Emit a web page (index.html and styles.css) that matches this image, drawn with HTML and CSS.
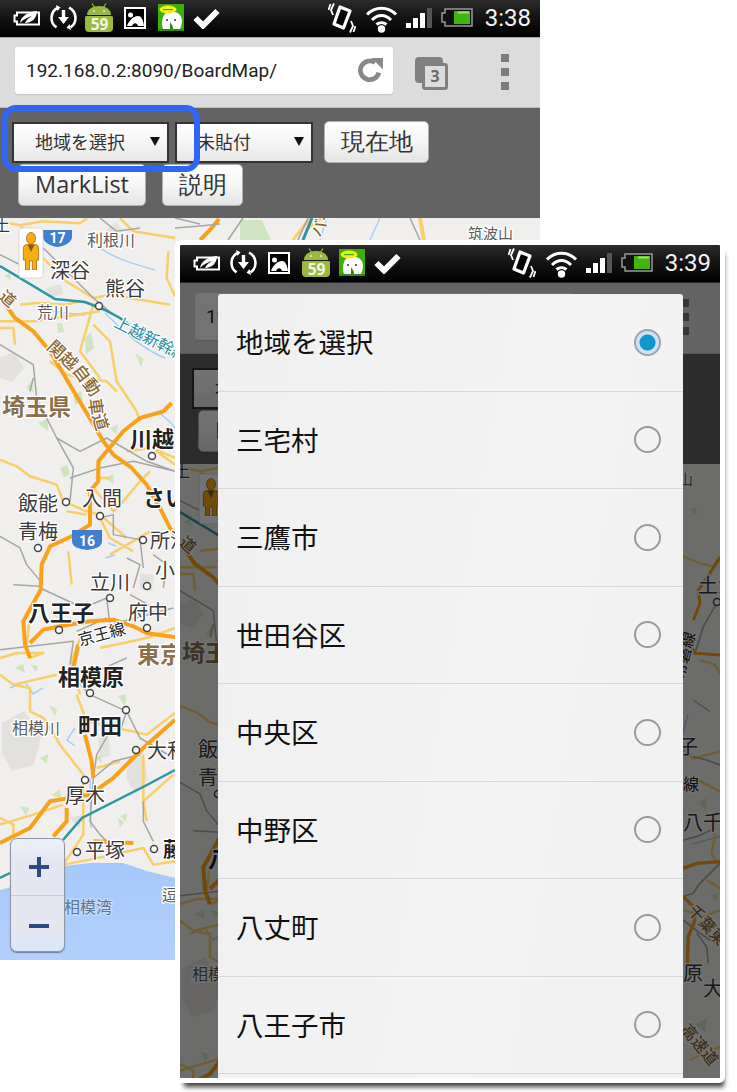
FILE: index.html
```html
<!DOCTYPE html>
<html lang="ja">
<head>
<meta charset="utf-8">
<title>BoardMap</title>
<link rel="stylesheet" href="styles.css">
</head>
<body>
<svg class="defs" width="0" height="0" aria-hidden="true">
  <defs>
    <linearGradient id="ic-sea" x1="0" y1="0" x2="0" y2="1"><stop offset="0" stop-color="#a5c8fb"/><stop offset="1" stop-color="#b3d0fc"/></linearGradient>
    <symbol id="i-leaf" viewBox="0 0 28 18">
      <path d="M4 3.5H26V15.5H4V12.5H1.5V6.5H4Z" fill="none" stroke="#fff" stroke-width="2"/>
      <path d="M7 14C8 7 15 3 24 2C24 9 19 14 12 14C14 10 16 9 19 7C15 8 11 10 7 14Z" fill="#fff"/>
    </symbol>
    <symbol id="i-sync" viewBox="0 0 27 27">
      <path d="M8 3.6A11.5 11.5 0 0 0 6.5 23.4M19 3.6A11.5 11.5 0 0 1 20.5 23.4" fill="none" stroke="#fff" stroke-width="2.600"/>
      <path d="M6 1L10.500 3.200L7.500 7ZM21 26L16.500 23.800L19.500 20Z" fill="#fff"/>
      <path d="M11.800 6H15.200V13H19L13.500 20L8 13H11.800Z" fill="#fff"/>
    </symbol>
    <symbol id="i-droid" viewBox="0 0 28 29">
      <path d="M7 0.500L10 5M21 0.500L18 5" stroke="#9ab93f" stroke-width="1.200" fill="none"/>
      <path d="M2 12C2 6 8 3 14 3C20 3 26 6 26 12Z" fill="#9ab93f"/>
      <circle cx="9" cy="8" r="1.100" fill="#dfe8c0"/>
      <circle cx="19" cy="8" r="1.100" fill="#dfe8c0"/>
      <path d="M0 15C0 13 1 13 2 13H26C27 13 28 13 28 15V25C28 28 26 29 24 29H4C2 29 0 28 0 25Z" fill="#9ab93f"/>
      <text class="droid-num" x="14.500" y="27">59</text>
    </symbol>
    <symbol id="i-image" viewBox="0 0 22 22">
      <rect x="1" y="1" width="20" height="20" fill="#000" stroke="#fff" stroke-width="2"/>
      <circle cx="6.500" cy="8" r="2.500" fill="#fff"/>
      <path d="M3 19C5 13 10 9 14 9C17 9 19 12 20 19H14C13 16 10 15 8 19Z" fill="#fff"/>
    </symbol>
    <symbol id="i-check" viewBox="0 0 27 22">
      <path d="M2.500 11L10 18.500L24.500 4" fill="none" stroke="#fff" stroke-width="6"/>
    </symbol>
    <symbol id="i-vibrate" viewBox="0 0 28 30">
      <path d="M12 4L22 8L15.500 25L6 21Z" fill="#000" stroke="#fff" stroke-width="3.200" stroke-linejoin="round"/>
      <path d="M6 0.500L3 7L5 12M2.500 1L0.500 7M22 29.500L25 23L23 18M25.500 29L27.500 23" fill="none" stroke="#fff" stroke-width="1.800"/>
    </symbol>
    <symbol id="i-wifi" viewBox="0 0 33 30">
      <path d="M2 11.500C10 3 23 3 31 11.500M7 17C13 11 20 11 26 17M11.500 21.500C14.500 19 18.500 19 21.500 21.500" fill="none" stroke="#fff" stroke-width="3"/>
      <circle cx="16.500" cy="26" r="3.700" fill="#fff"/>
    </symbol>
    <symbol id="i-signal" viewBox="0 0 26 20">
      <rect x="0" y="15" width="5" height="5" fill="#fff"/>
      <rect x="7" y="10" width="5" height="10" fill="#fff"/>
      <rect x="14" y="5" width="5" height="15" fill="#fff"/>
      <rect x="21" y="0" width="5" height="20" fill="#555"/>
    </symbol>
    <symbol id="i-battery" viewBox="0 0 32 19">
      <path d="M4 1H31V18H4V14H1V5H4Z" fill="#111" stroke="#999" stroke-width="1.500"/>
      <rect x="13" y="3" width="16" height="13" fill="#3fb60f"/>
      <rect x="17" y="3.500" width="11" height="2" fill="#9fe06a"/>
    </symbol>
    <symbol id="i-owl" viewBox="0 0 26 27">
      <rect width="26" height="27" fill="#3caf0c"/>
      <path d="M5 25C3 20 4 12 8 9C12 7 19 7 22 11C25 15 24 21 22 25Z" fill="#fff"/>
      <ellipse cx="10" cy="5.500" rx="8.500" ry="4" fill="#f3ee16"/>
      <rect x="5" y="5" width="10" height="1.200" fill="#3caf0c"/>
      <circle cx="9" cy="16" r="1" fill="#333"/>
      <circle cx="17" cy="16" r="1" fill="#333"/>
      <path d="M12 18C13 20 15 21 15 25H12Z" fill="#2c8a10"/>
      <rect y="25" width="26" height="2" fill="#2c8a10"/>
    </symbol>
    <symbol id="i-peg" viewBox="0 0 26 42" preserveAspectRatio="none">
      <circle cx="13" cy="7" r="6.500" fill="#f7ac0f" stroke="#a86a0c"/>
      <path d="M6 14H20C23 14 24 16 24 19V31H21V42H15V32H11V42H5V31H2V19C2 16 3 14 6 14Z" fill="#f7ac0f" stroke="#a86a0c"/>
      <path d="M8 14L13 22L18 14Z" fill="#8a5a20"/>
    </symbol>
    <g id="map">
      <rect width="540" height="742" fill="#f0efed"/>
      <path d="M0 672L33 663L65 648L90 645L123 645L147 653L175 660L300 670L540 680V742H0Z" fill="url(#ic-sea)"/>
      <g fill="#e3e1de">
        <path d="M0 140l14-6 10 16-12 14-12-4zM2 505l22-12 18 22-8 32-22 6-10-18zM128 540l14-8 6 30-12 14-10-16zM98 520l10-6 2 24-10 2zM70 600l12-3-2 14zM106 12l10-8 6 8-8 8zM45 70l16-4 2 10-12 4zM140 355l14 2-2 16-12-2zM28 640l14-6 6 14-14 4z"/>
      </g>
      <g fill="#cfe4c0">
        <path d="M57 105l5 0 2 9-6 1zM85 120l6-6 3 16-8 6zM26 170l6-8 1 12zM73 178l8-5 2 10-8 4zM110 210l8-3-2 10zM38 205l10-4 0 12zM60 250l7-3 3 10-7 2zM105 260l8-4 1 10zM135 135l9 6-3 8zM4 58l6-3 1 7zM50 395l9-3-1 9zM15 450l8-4 2 9zM40 540l8-4-1 10zM20 588l9 2-3 8zM118 600l6 4-4 6z"/>
        <path d="M240 2l22 0 10 22-32 0zM49 487l8 4-2 8zM52 577l8-6 2 10zM118 478l8-2-1 12zM95 540l6-4 1 9zM30 446l8 2-2 6zM120 598l7-3-1 8zM510 46l6-3 1 8zM519 338l8-4-1 14zM515 560l12-6-2 14zM530 430l8 0-2 8z"/>
      </g>
      <g fill="none" stroke="#a9cdf6" stroke-width="1.500">
        <path d="M100 30C115 40 130 45 155 52M105 95C120 110 140 130 165 140M40 92L85 97M160 195C165 200 172 205 175 210M105 340l10 -3M108 325l8 3"/>
        <path d="M10 470l15 -6 8 12 10-6M75 510l-8 12 8 6M90 560l1 50M130 390l25 4M380 0l-10 22M320 22l6-20M508 250l-6 24M512 380l30-8"/>
      </g>
      <g transform="scale(.3333)" fill="none" stroke="#f8cf68" stroke-width="7.500" stroke-linejoin="round">
        <path d="M0 10L60 22L130 10L240 16L262 0M360 0L400 40L525 60M130 120L190 185L280 240L330 230L510 260M60 260L110 255L200 260L240 250L300 265M280 260L240 400L300 480M280 320L330 370L350 490L410 580L420 610M0 310L100 310L230 290L300 280M150 430L200 470L320 490L350 520M300 720L290 780L330 780M500 670L470 700L525 740M0 725L50 745L90 775L170 800L190 850L260 880L300 890L380 960M280 810L340 880L370 850L420 790L450 760M505 100L500 180L525 235M0 330L40 330L45 380M300 900L330 960L400 1000M205 1000L215 1100M480 700L525 720M60 20L130 100M200 880L260 890M380 700L450 690M330 1010L450 940"/>
      </g>
      <g transform="scale(.3333)" fill="none" stroke="#a6a6a4" stroke-width="4.500" stroke-linejoin="round">
        <path d="M0 380L100 440L110 540L170 660L240 700L320 660L440 730L525 760M210 780L300 750L400 730L525 760M170 660L220 750L210 850M0 955L60 990L80 1040L130 1100M300 900L340 890L340 950L420 965L430 1050M460 1010L500 1040L490 1110M300 0L350 40L420 30M130 90L280 240L340 290M0 110L60 140L130 150M100 480L90 520M40 1100L120 1105M380 1020L420 1040L400 1110"/>
      </g>
      <g transform="scale(.3333)" fill="none" stroke="#f8a11b" stroke-width="12" stroke-linejoin="round">
        <path d="M10 250L45 300L100 340L150 400L310 670L340 710L395 750L440 800L480 870L510 930L525 950M515 555L490 580L420 600L370 640L320 700L295 730L295 790L270 820L270 920L215 955L150 985L125 1040L122 1110"/>
      </g>
      <path d="M0 48L55 81L85 84L105 92L120 100L175 140" fill="none" stroke="#2a97a3" stroke-width="2.500"/>
      <g transform="translate(0 370) scale(.3333)" fill="none" stroke="#f8cf68" stroke-width="7.500" stroke-linejoin="round">
        <path d="M0 210L50 195L130 195L90 210M0 260L40 290L90 300L90 370L130 390L180 470L250 560M40 290L170 260M230 320L260 400L440 440L525 375M250 560L250 740L190 830L270 815L430 780L460 830L525 820M0 710L100 680L190 650M430 500L430 640L440 700M430 640L520 560M360 520L290 540M300 180L440 150L525 120M0 690L40 710V750M240 150L215 220L240 320M90 90L80 170"/>
      </g>
      <g transform="translate(0 370) scale(.3333)" fill="none" stroke="#a6a6a4" stroke-width="4.500" stroke-linejoin="round">
        <path d="M0 185L130 170L220 160L210 230M320 30L330 110L520 60M320 90L230 130M380 210L290 250L240 290L270 320L380 370L420 450L520 510M380 370L360 430M330 430L290 500L280 570L340 520L420 500M280 570L270 700L300 740L340 780M430 640L430 700L460 760M390 20L500 80M120 0L250 60L320 30"/>
      </g>
      <g transform="translate(0 370) scale(.3333)" fill="none" stroke="#f8a11b" stroke-width="12" stroke-linejoin="round">
        <path d="M125 0L70 100L75 170L90 210M90 165L130 125L180 115L270 100L340 95L400 115L440 135L525 148M255 440L275 520L280 570M525 395L430 480L340 570L270 620L150 640L90 720L0 765M200 660L200 700L160 745M280 760L400 765M235 170L220 240"/>
      </g>
      <path d="M63 622L82 600L145 568L175 552" fill="none" stroke="#2a97a3" stroke-width="2.500"/>
      <path d="M0 660L10 655" fill="none" stroke="#2a97a3" stroke-width="2.500"/>
      <g fill="none" stroke-width="1.600">
        <path d="M219 1L210 12L200 22" stroke="#f8a11b" stroke-width="4"/>
        <path d="M175 10L200 8L220 6M243 0L228 22M175 0L200 6" stroke="#a6a6a4"/>
        <path d="M293 22L310 0M306 12L322 0" stroke="#f8cf68" stroke-width="3"/>
        <path d="M303 22L312 0" stroke="#2a97a3" stroke-width="3"/>
        <path d="M298 22L308 0" stroke="#a6a6a4"/>
        <path d="M420 0L424 22" stroke="#f8cf68" stroke-width="4"/>
        <path d="M410 0L420 22" stroke="#a6a6a4"/>
      </g>
      <g transform="translate(420 -4) scale(.3333)" fill="none" stroke-linejoin="round">
        <path d="M250 290L300 310L340 320L360 300M300 600L345 615L360 640" stroke="#f8cf68" stroke-width="7"/>
        <path d="M360 290L330 340L295 390L300 430L280 480M250 520L285 580L360 585" stroke="#f8a11b" stroke-width="9"/>
        <path d="M350 430L310 500L285 580" stroke="#a6a6a4" stroke-width="5"/>
        <path d="M280 720L330 755" stroke="#888" stroke-width="3"/>
      </g>
      <g transform="translate(500 276) scale(.3333)" fill="none" stroke-linejoin="round">
        <path d="M10 30L40 55L120 35M55 120L120 155M105 280L95 340L110 370M80 420L120 445M10 510L70 530L120 510M30 960L120 920" stroke="#f8cf68" stroke-width="7"/>
        <path d="M40 50L80 60L120 75M10 300L50 290L105 265M120 370L60 430L40 460L10 470M10 540L60 580L120 620M50 580L80 620L85 670" stroke="#a6a6a4" stroke-width="5"/>
        <path d="M10 385L50 370L120 365M10 470L40 500L45 540L25 590L22 670" stroke="#f8a11b" stroke-width="10"/>
      </g>
      <g class="pins">
        <circle cx="99" cy="88" r="3.500"/><circle cx="152" cy="238" r="3.500"/><circle cx="66" cy="284" r="3.500"/><circle cx="100" cy="298" r="3.500"/><circle cx="38" cy="330" r="3.500"/><circle cx="143" cy="322" r="3.500"/><circle cx="147" cy="368" r="3.500"/><circle cx="59" cy="412" r="3.500"/><circle cx="110" cy="380" r="3.500"/><circle cx="147" cy="410" r="3.500"/><circle cx="90" cy="475" r="3.500"/><circle cx="126" cy="492" r="3.500"/><circle cx="136" cy="532" r="3.500"/><circle cx="85" cy="562" r="3.500"/><circle cx="77" cy="634" r="3.500"/><circle cx="154" cy="631" r="3.500"/><circle cx="537" cy="138" r="3.500"/>
      </g>
      <g class="shield">
        <path d="M43 12H72V19C72 24 65 28 57.500 29C50 28 43 24 43 19Z"/>
        <path d="M72 312H102V323C102 329 95 331 87 332C79 331 72 329 72 323Z"/>
        <text class="shield-t" x="57.500" y="25">17</text>
        <text class="shield-t" x="87" y="328">16</text>
      </g>
      <g class="lbl">
        <text x="-6" y="13" class="t16">土</text>
        <text x="87" y="28" class="t16 soft">利根川</text>
        <text x="50" y="60" class="t20">深谷</text>
        <text x="105" y="78" class="t20">熊谷</text>
        <text x="37" y="100" class="t16 soft">荒川</text>
        <text x="-2" y="80" class="t16 road" transform="rotate(40 -2 80)">道</text>
        <text x="113" y="108" class="t16 rail" transform="rotate(27 113 108)">上越新幹線</text>
        <text class="t17 road"><textPath href="#road-a">関越自動車道</textPath></text>
        <text x="2" y="197" class="t23 brown">埼玉県</text>
        <text x="130" y="229" class="t22 bold">川越</text>
        <text x="143" y="288" class="t22 bold">さいたま</text>
        <text x="18" y="293" class="t20">飯能</text>
        <text x="82" y="288" class="t20">入間</text>
        <text x="18" y="321" class="t20">青梅</text>
        <text x="150" y="330" class="t20">所沢</text>
        <text x="155" y="360" class="t20">小平</text>
        <text x="90" y="372" class="t20">立川</text>
        <text x="28" y="403" class="t22 bold">八王子</text>
        <text x="128" y="402" class="t20">府中</text>
        <text x="80" y="428" class="t16 dark" transform="rotate(-15 80 428)">京王線</text>
        <text x="137" y="445" class="t23 brown">東京</text>
        <text x="58" y="467" class="t22 bold">相模原</text>
        <text x="12" y="516" class="t16 soft">相模川</text>
        <text x="78" y="516" class="t22 bold">町田</text>
        <text x="147" y="540" class="t20">大和</text>
        <text x="65" y="585" class="t20">厚木</text>
        <text x="85" y="640" class="t20">平塚</text>
        <text x="163" y="639" class="t20 bold">藤沢</text>
        <text x="64" y="695" class="t16 sea">相模湾</text>
        <text x="162" y="683" class="t16 soft">逗子</text>
        <text x="468" y="21" class="t15 soft">筑波山</text>
        <text x="320" y="20" class="t16 road" transform="rotate(-62 320 20)">バイパス</text>
        <text x="518" y="129" class="t20">土浦</text>
        <text x="498" y="165" class="t16 road" transform="rotate(-85 498 165)">自動車</text>
        <text x="503" y="216" class="t16 dark" transform="rotate(-75 503 216)">常磐線</text>
        <text x="458" y="290" class="t20">我孫子</text>
        <text x="471" y="326" class="t16 dark">総武線</text>
        <text x="503" y="366" class="t20">八千代</text>
        <text x="507" y="447" class="t16 road" transform="rotate(48 507 447)">千葉東</text>
        <text x="483" y="517" class="t20">市原</text>
        <text x="523" y="532" class="t20">大網</text>
        <text x="500" y="566" class="t16 road" transform="rotate(50 500 566)">高速道</text>
      </g>
      <path id="road-a" d="M46 130L76 158L88 174L90 190L100 224" fill="none"/>
      <rect x="19" y="10" width="24" height="50" rx="3" fill="#fff" stroke="#ccc" stroke-width=".7"/>
      <use href="#i-peg" x="22" y="14" width="18" height="38"/>
    </g>
  </defs>
</svg>

<main class="canvas">
  <section class="phone">
    <div class="status">
      <div class="st-left">
        <svg class="ic ic-leaf"><use href="#i-leaf"/></svg>
        <svg class="ic ic-sync"><use href="#i-sync"/></svg>
        <svg class="ic ic-droid"><use href="#i-droid"/></svg>
        <svg class="ic ic-image"><use href="#i-image"/></svg>
        <svg class="ic ic-owl"><use href="#i-owl"/></svg>
        <svg class="ic ic-check"><use href="#i-check"/></svg>
      </div>
      <div class="st-right">
        <svg class="ic ic-vibrate"><use href="#i-vibrate"/></svg>
        <svg class="ic ic-wifi"><use href="#i-wifi"/></svg>
        <svg class="ic ic-signal"><use href="#i-signal"/></svg>
        <svg class="ic ic-battery"><use href="#i-battery"/></svg>
        <span class="time">3:38</span>
      </div>
    </div>
    <div class="chrome">
      <div class="urlbar">
        <span class="url">192.168.0.2:8090/BoardMap/</span>
        <svg class="reload" viewBox="0 0 26 26"><path d="M21 15A9 9 0 1 1 17.500 5.500" fill="none" stroke="#888" stroke-width="4.500"/><path d="M14 1H25V12Z" fill="#888"/></svg>
      </div>
      <span class="tabs"><span class="tabs-num">3</span></span>
      <span class="dots"><i></i><i></i><i></i></span>
    </div>
    <div class="toolbar">
      <div class="tool-row">
        <div class="sel sel-a"><span>地域を選択</span><b class="arrow"></b></div>
        <div class="sel sel-b"><span>未貼付</span><b class="arrow"></b></div>
        <button class="btn btn-now">現在地</button>
      </div>
      <div class="tool-row tool-row-2">
        <button class="btn btn-list">MarkList</button>
        <button class="btn btn-help">説明</button>
      </div>
    </div>
    <div class="map map-a">
      <svg class="map-svg" viewBox="0 0 540 742"><use href="#map"/></svg>
      <div class="zoomctl"><span class="z-plus"></span><span class="z-minus"></span></div>
    </div>
    <div class="highlight"></div>
  </section>

  <section class="phone phone-b">
    <div class="status">
      <div class="st-left">
        <svg class="ic ic-leaf"><use href="#i-leaf"/></svg>
        <svg class="ic ic-sync"><use href="#i-sync"/></svg>
        <svg class="ic ic-image"><use href="#i-image"/></svg>
        <svg class="ic ic-droid"><use href="#i-droid"/></svg>
        <svg class="ic ic-owl"><use href="#i-owl"/></svg>
        <svg class="ic ic-check"><use href="#i-check"/></svg>
      </div>
      <div class="st-right">
        <svg class="ic ic-vibrate"><use href="#i-vibrate"/></svg>
        <svg class="ic ic-wifi"><use href="#i-wifi"/></svg>
        <svg class="ic ic-signal"><use href="#i-signal"/></svg>
        <svg class="ic ic-battery"><use href="#i-battery"/></svg>
        <span class="time">3:39</span>
      </div>
    </div>
    <div class="dimmed">
      <div class="chrome">
        <div class="urlbar">
          <span class="url">192.168.0.2:8090/BoardMap/</span>
        </div>
        <span class="tabs"><span class="tabs-num">3</span></span>
        <span class="dots"><i></i><i></i><i></i></span>
      </div>
      <div class="toolbar">
        <div class="tool-row">
          <div class="sel sel-a"><span>地域を選択</span><b class="arrow"></b></div>
          <div class="sel sel-b"><span>未貼付</span><b class="arrow"></b></div>
          <button class="btn btn-now">現在地</button>
        </div>
        <div class="tool-row tool-row-2">
          <button class="btn btn-list">MarkList</button>
          <button class="btn btn-help">説明</button>
        </div>
      </div>
      <div class="map map-b">
        <svg class="map-svg" viewBox="0 0 540 742"><use href="#map"/></svg>
      </div>
      <div class="scrim"></div>
      <div class="dialog">
        <div class="opt"><span>地域を選択</span><i class="radio on"></i></div>
        <div class="opt"><span>三宅村</span><i class="radio"></i></div>
        <div class="opt"><span>三鷹市</span><i class="radio"></i></div>
        <div class="opt"><span>世田谷区</span><i class="radio"></i></div>
        <div class="opt"><span>中央区</span><i class="radio"></i></div>
        <div class="opt"><span>中野区</span><i class="radio"></i></div>
        <div class="opt"><span>八丈町</span><i class="radio"></i></div>
        <div class="opt"><span>八王子市</span><i class="radio"></i></div>
      </div>
    </div>
  </section>
</main>
</body>
</html>
```
FILE: styles.css
```css
* { box-sizing: border-box; }
html, body { margin: 0; padding: 0; background: #fff; }
body { font-family: "Noto Sans CJK JP", "Noto Sans", sans-serif; }
.defs { position: absolute; width: 0; height: 0; }

.canvas { position: relative; width: 737px; height: 1092px; overflow: hidden; }
.phone { position: relative; width: 540px; }

/* second screenshot, laid over the first like a window */
.phone-b {
  position: absolute;
  left: 180px;
  top: 245px;
  height: 833px;
  outline: 5px solid #fff;
  border-radius: 1px;
  box-shadow: 4px 9px 5px 0 rgba(30, 30, 30, .85);
}
.dimmed { position: relative; height: 795px; overflow: hidden; }
.phone-b .chrome { height: 71px; }
.phone-b .status { border-bottom-color: #2a2a2a; }

/* status bar */
.status {
  height: 38px;
  display: flex;
  justify-content: space-between;
  align-items: center;
  padding: 0 9px 2px 13px;
  background: linear-gradient(#2c2c2c, #141414 45%, #000);
  border-bottom: 1px solid #a8a8a8;
}
.st-left, .st-right { display: flex; align-items: center; }
.ic { display: block; flex: none; }
.ic-leaf { width: 28px; height: 18px; margin-right: 9px; }
.ic-sync { width: 27px; height: 27px; margin-right: 8px; }
.ic-droid { width: 28px; height: 29px; }
.ic-image { width: 22px; height: 22px; margin: 0 12px 0 11px; }
.ic-owl { width: 26px; height: 27px; margin-right: 9px; }
.ic-check { width: 27px; height: 22px; }
.phone-b .ic-sync { margin-right: 10px; }
.phone-b .ic-image { margin: 0 12px 0 1px; }
.phone-b .ic-droid { margin-right: 9px; }
.ic-vibrate { width: 28px; height: 30px; margin-right: 9px; }
.ic-wifi { width: 33px; height: 30px; margin-right: 8px; }
.ic-signal { width: 26px; height: 20px; margin-right: 9px; }
.ic-battery { width: 32px; height: 19px; margin-right: 12px; }
.time { color: #f4f4f4; font: 24px/1 Roboto, sans-serif; }
.droid-num {
  fill: #f2f5e6;
  font: 700 15.500px "Open Sans", sans-serif;
  text-anchor: middle;
}

/* browser chrome */
.chrome {
  position: relative;
  height: 70px;
  display: flex;
  align-items: center;
  padding: 0 28px 4px 15px;
  background: #dcdcdc;
  border-bottom: 1px solid #bdbdbd;
}
.urlbar {
  width: 378px;
  height: 47px;
  display: flex;
  align-items: center;
  justify-content: space-between;
  padding: 0 9px 0 11px;
  background: #fff;
  border-radius: 3px;
  box-shadow: 0 1px 1px rgba(0, 0, 0, .12);
}
.url { color: #222; font: 19px/1 Roboto, sans-serif; }
.reload { width: 27px; height: 27px; }
.tabs {
  position: relative;
  display: block;
  width: 33px;
  height: 33px;
  margin: 5px 0 0 22px;
}
.tabs::before {
  content: "";
  position: absolute;
  left: 0;
  top: 0;
  width: 28px;
  height: 26px;
  background: #808080;
  border-radius: 4px;
}
.tabs-num {
  position: absolute;
  left: 7px;
  top: 6px;
  width: 26px;
  height: 27px;
  background: #dcdcdc;
  border: 3.500px solid #808080;
  border-radius: 3px;
  color: #6a6a6a;
  font: 700 16px/20px "Open Sans", sans-serif;
  text-align: center;
}
.dots { display: flex; flex-direction: column; gap: 6px; margin: 2px 3px 0 auto; }
.dots i { display: block; width: 8px; height: 8px; background: #7b7b7b; }

/* page toolbar */
.toolbar {
  height: 110px;
  padding: 13px 0 0 12px;
  background: #636363;
}
.tool-row { display: flex; align-items: center; }
.tool-row-2 { padding-left: 6px; gap: 16px; margin-top: 1px; }
.sel {
  position: relative;
  height: 41px;
  background: linear-gradient(#fff, #f4f4f4 55%, #e6e6e6);
  border: 2px solid #333;
  color: #333;
  font-size: 18px;
  line-height: 34px;
}
.sel-a { width: 157px; margin-right: 6px; padding-left: 21px; }
.sel-b { width: 138px; margin-right: 11px; padding-left: 20px; }
.arrow {
  position: absolute;
  right: 7px;
  top: 13px;
  border-left: 5px solid transparent;
  border-right: 5px solid transparent;
  border-top: 9px solid #111;
}
.btn {
  height: 42px;
  padding: 0;
  background: linear-gradient(#fff, #f6f6f6 50%, #e4e4e4);
  border: 1px solid #b0b0b0;
  border-radius: 5px;
  color: #333;
  font-size: 24px;
  line-height: 1;
}
.btn-now { width: 105px; }
.btn-list { width: 128px; font-family: "Open Sans", sans-serif; font-size: 23.500px; }
.btn-help { width: 81px; }

.highlight {
  position: absolute;
  left: 2px;
  top: 105px;
  width: 198px;
  height: 67px;
  border: 6px solid #2f66f5;
  border-radius: 14px;
}

/* map */
.map { position: relative; overflow: hidden; width: 540px; }
.map-a { height: 742px; }
.map-b { height: 615px; }
.map-svg { display: block; width: 540px; height: 742px; }
.pins circle { fill: #fff; stroke: #444; stroke-width: 1.500; }
.shield path { fill: #3f7fce; }
.shield-t { fill: #fff; font: 700 14px Roboto, sans-serif; text-anchor: middle; }
.lbl text {
  fill: #3a3a3a;
  stroke: #fff;
  stroke-width: 2.500px;
  paint-order: stroke;
  font-family: "Noto Sans CJK JP", sans-serif;
}
.lbl .t15 { font-size: 15px; }
.lbl .t16 { font-size: 16px; }
.lbl .t17 { font-size: 17px; }
.lbl .t20 { font-size: 20px; }
.lbl .t22 { font-size: 22px; }
.lbl .t23 { font-size: 23px; }
.lbl .bold { font-weight: 700; fill: #222; }
.lbl .brown { font-weight: 700; fill: #8b714b; }
.lbl .soft { fill: #5c5c5c; }
.lbl .dark { fill: #222; }
.lbl .rail { fill: #2a8fa0; }
.lbl .road { fill: #8d6a38; font-weight: 500; }
.lbl .sea { fill: #5f7896; stroke: #c4dafc; }

.zoomctl {
  position: absolute;
  left: 10px;
  top: 620px;
  width: 55px;
  height: 114px;
  background: linear-gradient(#eaf0fb, #e4e7f2 20%, #e5e7f1 80%, #d9e7fb);
  border: 1px solid #8f96a3;
  border-radius: 7px;
  box-shadow: 0 1px 1px rgba(0, 0, 0, .4);
}
.zoomctl::before {
  content: "";
  position: absolute;
  left: 0;
  right: 0;
  top: 56px;
  border-top: 1px solid #c9ccd4;
}
.z-plus, .z-minus { position: absolute; left: 18px; width: 20px; height: 4px; background: #2c4b82; }
.z-plus { top: 26px; }
.z-plus::after {
  content: "";
  position: absolute;
  left: 8px;
  top: -8px;
  width: 4px;
  height: 20px;
  background: #2c4b82;
}
.z-minus { top: 85px; }

/* dialog */
.scrim { position: absolute; inset: 0; background: rgba(0, 0, 0, .55); }
.dialog {
  position: absolute;
  left: 38px;
  top: 11px;
  width: 465px;
  bottom: 0;
  overflow: hidden;
  background: linear-gradient(100deg, #f0f0f0, #f3f3f3 60%, #f1f1f1);
  border-radius: 3px 3px 0 0;
}
.opt {
  height: 97.500px;
  display: flex;
  align-items: center;
  justify-content: space-between;
  padding: 0 22px 0 18px;
  border-bottom: 1.500px solid #d8d8d8;
  color: #111;
  font-size: 27.500px;
}
.opt span { margin-bottom: 2px; }
.radio {
  display: block;
  width: 27px;
  height: 27px;
  border: 2px solid #9a9a9a;
  border-radius: 50%;
}
.radio.on {
  background: radial-gradient(circle, #0f97d0 0 7.500px, #cfe2f5 8.500px);
  border-color: #9aa4ae;
}
```
